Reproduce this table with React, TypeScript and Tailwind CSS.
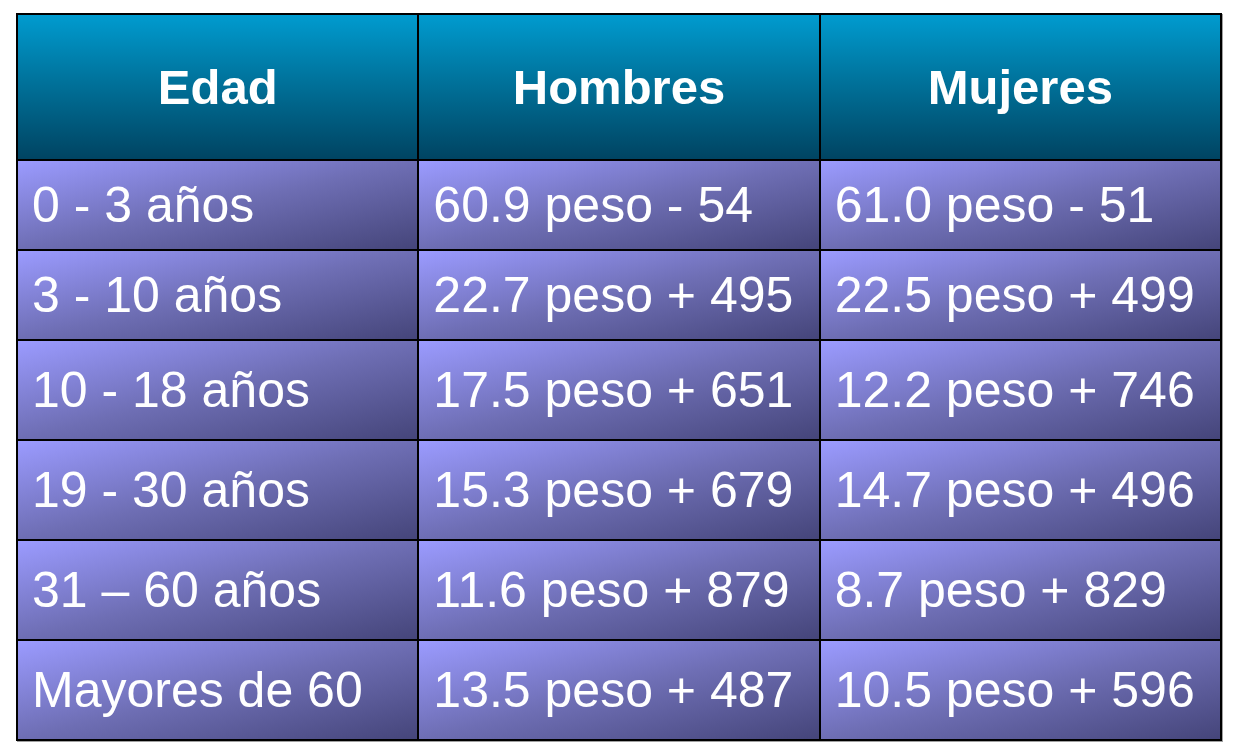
const rows = [
  { edad: '0 - 3 años', hombres: '60.9 peso - 54', mujeres: '61.0 peso - 51', h: 'h-[90px]' },
  { edad: '3 - 10 años', hombres: '22.7 peso + 495', mujeres: '22.5 peso + 499', h: 'h-[90px]' },
  { edad: '10 - 18 años', hombres: '17.5 peso + 651', mujeres: '12.2 peso + 746', h: 'h-[100px]' },
  { edad: '19 - 30 años', hombres: '15.3 peso + 679', mujeres: '14.7 peso + 496', h: 'h-[100px]' },
  { edad: '31 – 60 años', hombres: '11.6 peso + 879', mujeres: '8.7 peso + 829', h: 'h-[100px]' },
  { edad: 'Mayores de 60', hombres: '13.5 peso + 487', mujeres: '10.5 peso + 596', h: 'h-[100px]' },
]

const headCell =
  "border-2 border-black bg-[linear-gradient(to_bottom,#009bcf,#00739c_45%,#004462)] text-center font-['Liberation_Sans'] font-bold text-[49px] leading-none text-white"

const bodyCell =
  "border-2 border-black bg-[linear-gradient(to_bottom_right,#9b9bff,#6e6eb4_50%,#45457a)] pl-[14px] text-left font-['Liberation_Sans'] text-[50px] leading-none text-white whitespace-nowrap"

export default function App() {
  return (
    <div className="min-h-screen bg-white pl-[16px] pt-[13px] font-['Liberation_Sans']">
      <table className="w-[1206px] table-fixed border-collapse border-2 border-black shadow-[1px_1px_0_#a0a0a0]">
        <thead>
          <tr className="h-[146px]">
            <th className={headCell}>Edad</th>
            <th className={headCell}>Hombres</th>
            <th className={headCell}>Mujeres</th>
          </tr>
        </thead>
        <tbody>
          {rows.map((r) => (
            <tr key={r.edad} className={r.h}>
              <td className={bodyCell}>{r.edad}</td>
              <td className={bodyCell}>{r.hombres}</td>
              <td className={bodyCell}>{r.mujeres}</td>
            </tr>
          ))}
        </tbody>
      </table>
    </div>
  )
}
